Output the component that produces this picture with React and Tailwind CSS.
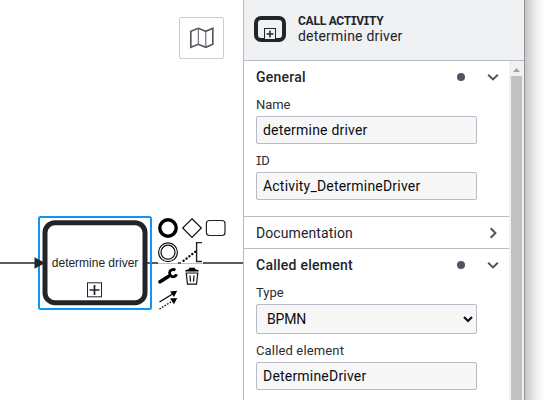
import React from "react";

function Chevron({ open }) {
  return (
    <svg className="w-4 h-4 shrink-0" viewBox="0 0 16 16" fill="none" stroke="#4d5562" strokeWidth="2">
      {open ? <path d="M3.2 5.7 8 10.4 12.8 5.7" /> : <path d="M5.7 3.2 10.4 8 5.7 12.8" />}
    </svg>
  );
}

/* Capital I with serifs */
function SerifI() {
  return <span className="font-[Inter] text-[0.95em] leading-none [font-feature-settings:'cv08','ss02']">I</span>;
}

function GroupHeader({ title, open, spacing }) {
  return (
    <div className="h-8 pl-3 pr-2 flex items-center">
      <span className={`flex-1 text-[14px] leading-8 whitespace-nowrap text-[#22242a] ${spacing} ${open ? "font-medium" : "font-normal"}`}>{title}</span>
      {open && <span className="w-2 h-2 rounded-full bg-[#505562] mr-5" />}
      <Chevron open={open} />
    </div>
  );
}

function Field({ label, value, labelSpacing, valueSpacing, select }) {
  return (
    <div>
      <div className={`h-[23px] pt-[3px] text-[13px] leading-[18px] text-[#2c2e35] ${labelSpacing}`}>{label}</div>
      <div className={`w-[221px] border border-[#b9bac8] rounded-[2px] bg-[#f7f7f8] flex items-center justify-between text-[14px] text-[#0c0c10] ${select ? "h-[30px] pl-[10px]" : "h-7 pl-[6px]"}`}>
        <span className={valueSpacing}>{value}</span>
        {select && (
          <svg className="w-[10px] h-[8px] mr-[3px]" viewBox="0 0 10 8" fill="none" stroke="#0c0c10" strokeWidth="2">
            <path d="M1 2 5 6 9 2" />
          </svg>
        )}
      </div>
    </div>
  );
}

function Diagram() {
  return (
    <svg className="block w-[243px] h-[400px]" viewBox="0 0 243 400" fill="none">
      <path d="M0 263H36M147 263H243" stroke="#22242a" strokeWidth="1.6" />
      <rect x="39" y="217" width="112" height="92" rx="1.5" stroke="#0d96f6" strokeWidth="2" />
      <rect x="45" y="222.7" width="100" height="80" rx="10" fill="white" stroke="#22242a" strokeWidth="5" />
      <path d="M34.5 257.3 45 263 34.5 268.7Z" fill="#22242a" />
      <text x="51.8" y="267" textLength="86.5" fontSize="12" fill="#22242a" fontFamily="'Liberation Sans', Arial, sans-serif">determine driver</text>
      <rect x="87.5" y="282.8" width="14" height="14" stroke="#22242a" />
      <path d="M94.5 285V295M89.5 290H99.5" stroke="#22242a" strokeWidth="1.7" />

      <path d="M158 262.5H178M181 262.5H203" stroke="white" strokeWidth="2.2" />
      <path d="M158 263.5H178M181 263.5H203" stroke="#c4c4c4" strokeWidth="0.8" />
      <circle cx="168" cy="228" r="8.2" stroke="black" strokeWidth="3.4" />
      <path d="M192 218.8 201.3 228 192 237.4 182.7 228Z" stroke="#111" strokeWidth="1.2" fill="white" />
      <rect x="206.4" y="220.5" width="18.6" height="15" rx="3" stroke="#222" strokeWidth="1.2" fill="white" />
      <circle cx="168" cy="252.2" r="9.4" stroke="#111" strokeWidth="1.2" fill="white" />
      <circle cx="168" cy="252.2" r="7" stroke="#111" strokeWidth="1.2" />
      <path d="M183.6 260.7 195.2 251.8" stroke="black" strokeWidth="2.3" strokeLinecap="round" strokeDasharray="0.1 3.55" />
      <path d="M202 242.6H196.6V261.5H202" stroke="#281d2e" strokeWidth="1.4" />
      <path d="M160 281.8 168 276.7" stroke="black" strokeWidth="3.6" strokeLinecap="round" />
      <path d="M168 276.7 171 274.8" stroke="black" strokeWidth="2.4" />
      <path d="M175.3 270.2A3.6 3.6 0 1 0 176.6 274.3" stroke="black" strokeWidth="2.8" />
      <path d="M185.3 271.6H198.7V270.2L195 269V267.8H189V269L185.3 270.2Z" fill="black" />
      <path d="M186.2 273H197.8L196.5 284.2H187.5ZM190 275.5 190.5 281.8M194 275.5 193.5 281.8" stroke="#111" strokeWidth="1.2" />
      <path d="M159.5 302 172.5 294" stroke="black" strokeWidth="1.2" />
      <path d="M159.5 309 172.5 301" stroke="black" strokeWidth="1.3" strokeDasharray="1.5 1.5" />
      <path d="M177.2 290.8 174 297 170 291.4ZM177.2 298 174 304.2 170 298.6Z" fill="black" />
    </svg>
  );
}

export default function App() {
  return (
    <div className="w-[550px] h-[400px] overflow-hidden bg-white flex font-[Roboto,'Noto_Sans',sans-serif]">
      <main className="relative w-[243px] shrink-0">
        <Diagram />
        <button className="absolute left-[179px] top-[17px] w-[45px] h-[42px] border border-[#cccccc] rounded-[2px] bg-white flex items-center justify-center">
          <svg className="w-[26px] h-6" viewBox="0 0 26 24" fill="none" stroke="#555762">
            <path d="M1.8 5.3 9.3 2.3 16.8 5.3 23.8 2.3V18.3L16.8 21.3 9.3 18.3 1.8 21.3Z" strokeWidth="1.7" />
            <path d="M9.3 2.3V18.3M16.8 5.3V21.3" strokeWidth="1" />
          </svg>
        </button>
      </main>

      <aside className="w-[281px] shrink-0 border-l border-[#b9bac8] flex flex-col">
        <header className="h-[61px] shrink-0 border-b border-[#b9bac8] bg-[#eff1f3] flex pl-[10px]">
          <svg className="w-8 h-8 mt-[13px]" viewBox="0 0 32 32" fill="none" stroke="#22242a">
            <rect x="2" y="5" width="28" height="22" rx="5" strokeWidth="4" />
            <rect x="10.5" y="15.5" width="11" height="11" fill="#eff1f3" />
            <path d="M16 17.5V24.5M12.5 21H19.5" strokeWidth="1.5" />
          </svg>
          <div className="ml-3 pt-[14px] text-[14px] leading-[15px] text-[#22242a] whitespace-nowrap">
            <div className="h-[15px] text-[12px] font-bold tracking-[-0.25px]">CALL ACT<SerifI />V<SerifI />TY</div>
            <div className="tracking-[0.2px]">determine driver</div>
          </div>
        </header>
        <div className="flex-1 flex min-h-0">
          <div className="w-[265px] overflow-hidden">
            <section className="h-[156px] border-b border-[#b9bac8]">
              <GroupHeader title="General" open spacing="tracking-[0.25px]" />
              <div className="pl-3 flex flex-col gap-[5px]">
                <Field label="Name" value="determine driver" labelSpacing="tracking-[-0.1px]" valueSpacing="tracking-[0.2px]" />
                <Field label={<><SerifI />D</>} value="Activity_DetermineDriver" labelSpacing="tracking-[-0.1px]" valueSpacing="tracking-[0.2px]" />
              </div>
            </section>
            <section className="border-b border-[#b9bac8] h-8">
              <GroupHeader title="Documentation" spacing="tracking-[0.1px]" />
            </section>
            <section>
              <GroupHeader title="Called element" open spacing="tracking-[0.25px]" />
              <div className="pl-3 flex flex-col gap-[5px]">
                <Field label="Type" value="BPMN" select labelSpacing="tracking-normal" valueSpacing="tracking-[-0.2px]" />
                <Field label="Called element" value="DetermineDriver" labelSpacing="tracking-[0.15px]" valueSpacing="tracking-[0.2px]" />
              </div>
            </section>
          </div>
          <div className="w-[15px] bg-[#f1f1f1] flex flex-col items-center pr-[1px]">
            <div className="h-[15px] flex items-center">
              <svg className="w-[7px] h-1 mt-[2px]" viewBox="0 0 7 4"><path d="M0 4 3.5 0 7 4Z" fill="#a1a1a1" /></svg>
            </div>
            <div className="w-[11px] flex-1 bg-[#c1c1c1]" />
          </div>
        </div>
      </aside>
      <div className="flex-1 border-l border-[#929294] bg-linear-to-r from-[#c6c6c6] via-[#efefef] via-45% to-white to-80%" />
    </div>
  );
}
